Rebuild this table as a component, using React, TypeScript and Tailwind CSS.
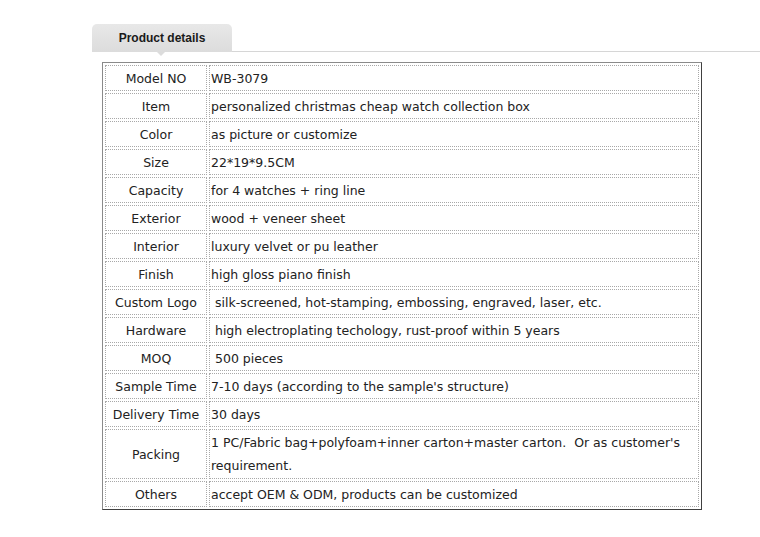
export default function App() {
  const rows: [string, string][] = [
    ["Model NO", "WB-3079"],
    ["Item", "personalized christmas cheap watch collection box"],
    ["Color", "as picture or customize"],
    ["Size", "22*19*9.5CM"],
    ["Capacity", "for 4 watches + ring line"],
    ["Exterior", "wood + veneer sheet"],
    ["Interior", "luxury velvet or pu leather"],
    ["Finish", "high gloss piano finish"],
    ["Custom Logo", "\u00a0silk-screened, hot-stamping, embossing, engraved, laser, etc."],
    ["Hardware", "\u00a0high electroplating techology, rust-proof within 5 years"],
    ["MOQ", "\u00a0500 pieces"],
    ["Sample Time", "7-10 days (according to the sample's structure)"],
    ["Delivery Time", "30 days"],
    ["Packing", "1 PC/Fabric bag+polyfoam+inner carton+master carton.\u00a0 Or as customer's requirement."],
    ["Others", "accept OEM & ODM, products can be customized"],
  ];

  return (
    <div className="min-h-[537px] w-[760px] bg-white pt-[24px]">
      {/* tab strip */}
      <div className="relative flex h-[28px]">
        <div className="w-[92px] border-b border-white" />
        <div className="flex h-[28px] w-[140px] items-center justify-center rounded-t-[5px] bg-gradient-to-b from-[#e8e8e8] to-[#dcdcdc] pb-[1px] font-['Liberation_Sans',Arial,sans-serif] text-[12px] font-bold text-[#1a1a1a]">
          Product details
        </div>
        <div className="flex-1 border-b border-[#d6d6d6]" />
        <div className="absolute left-[157px] top-[28px] h-0 w-0 border-x-[4px] border-t-[4px] border-x-transparent border-t-[#dcdcdc]" />
      </div>

      {/* details table */}
      <div className="ml-[102px] mt-[10px]">
        <table className="w-[600px] border-separate border-spacing-[2px] border border-t-[#8a8a8a] border-l-[#8a8a8a] border-r-[#404040] border-b-[#404040] font-['DejaVu_Sans',Verdana,sans-serif] text-[12.5px] leading-[23px] text-[#222]">
          <tbody>
            {rows.map(([label, value]) => (
              <tr key={label}>
                <td className="w-[102px] border border-dotted border-[#a8a8a8] px-0 pt-[1px] pb-0 text-center align-middle">
                  {label}
                </td>
                <td
                  className={
                    label === "Packing"
                      ? "border border-dotted border-[#a8a8a8] pt-[1px] pb-[1px] pl-[1px] pr-0 text-left align-middle"
                      : "border border-dotted border-[#a8a8a8] pt-[1px] pb-0 pl-[1px] pr-0 text-left align-middle"
                  }
                >
                  {value}
                </td>
              </tr>
            ))}
          </tbody>
        </table>
      </div>
    </div>
  );
}
